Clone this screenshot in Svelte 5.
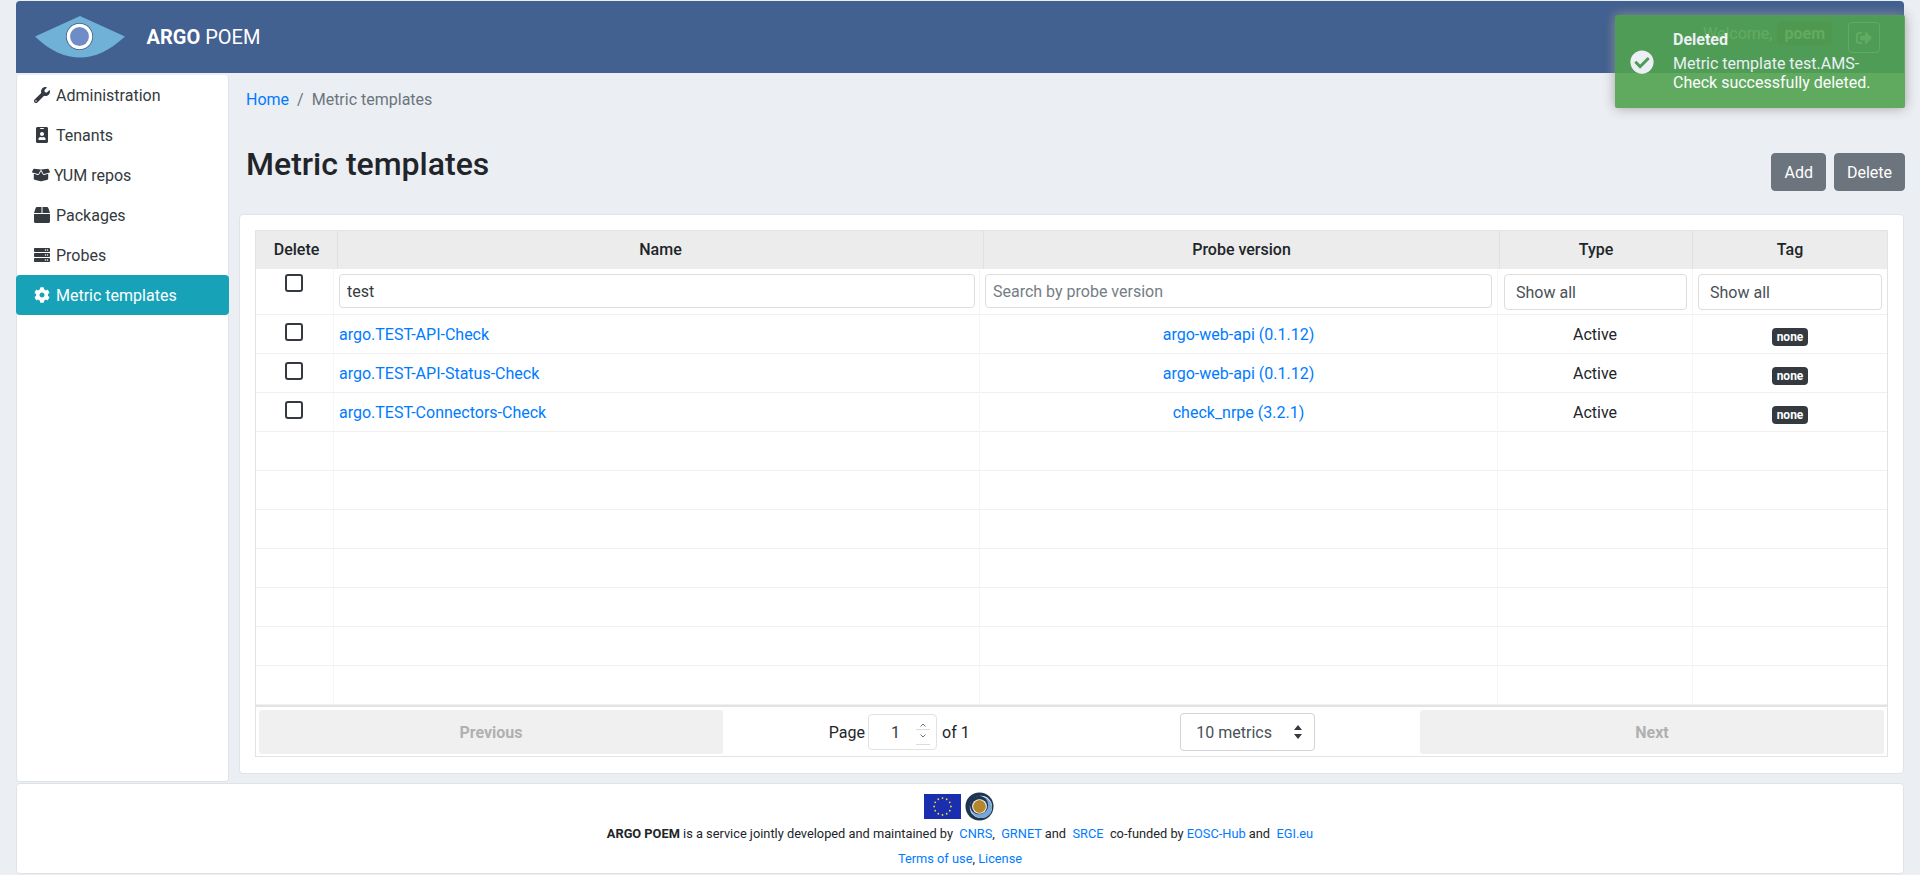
<script>
  const icons = {
    wrench: ['0 0 512 512', 'M507.73 109.1c-2.24-9.03-13.54-12.09-20.12-5.51l-74.36 74.36-67.88-11.31-11.31-67.88 74.36-74.36c6.62-6.62 3.43-17.9-5.66-20.16-47.38-11.74-99.55.91-136.58 37.93-39.64 39.64-50.55 97.1-34.05 147.2L18.74 402.76c-24.99 24.99-24.99 65.51 0 90.5 24.99 24.99 65.51 24.99 90.5 0l213.21-213.21c50.12 16.71 107.47 5.68 147.37-34.22 37.07-37.07 49.7-89.32 37.91-136.73zM64 472c-13.25 0-24-10.75-24-24 0-13.26 10.75-24 24-24s24 10.74 24 24c0 13.25-10.75 24-24 24z'],
    badge: ['0 0 384 512', 'M336 0H48C21.5 0 0 21.5 0 48v416c0 26.5 21.5 48 48 48h288c26.5 0 48-21.5 48-48V48c0-26.5-21.5-48-48-48zM144 32h96c8.8 0 16 7.2 16 16s-7.2 16-16 16h-96c-8.8 0-16-7.2-16-16s7.2-16 16-16zm48 128c35.3 0 64 28.7 64 64s-28.7 64-64 64-64-28.7-64-64 28.7-64 64-64zm112 236.8c0 10.6-10 19.2-22.4 19.2H102.4C90 416 80 407.4 80 396.8v-19.2c0-31.8 30.1-57.6 67.2-57.6h5c12.3 5.1 25.7 8 39.8 8s27.6-2.9 39.8-8h5c37.1 0 67.2 25.8 67.2 57.6v19.2z'],
    boxOpen: ['0 0 640 512', 'M425.7 256c-16.9 0-32.8-9-41.4-23.4L320 126l-64.2 106.6c-8.7 14.5-24.6 23.5-41.5 23.5-4.5 0-9-.6-13.3-1.9L64 215v178c0 14.7 10 27.5 24.2 31l216.2 54.1c10.2 2.5 20.9 2.5 31 0L551.8 424c14.2-3.6 24.2-16.4 24.2-31V215l-137 39.1c-4.3 1.3-8.8 1.9-13.3 1.9zm212.6-112.2L586.8 41c-3.1-6.2-9.8-9.8-16.7-8.9L320 64l91.7 152.1c3.8 6.3 11.4 9.3 18.5 7.3l197.9-56.5c9.9-2.9 14.7-13.9 9.9-23.1zM53.2 41L1.7 143.8c-4.9 9.2 0 20.2 9.8 23l197.9 56.5c7.1 2 14.7-1 18.5-7.3L320 64 69.8 32.1c-6.9-.8-13.5 2.7-16.6 8.9z'],
    box: ['0 0 512 512', 'M509.5 184.6L458.9 32.8C452.4 13.2 434.1 0 413.4 0H272v192h238.7c-.4-2.5-.4-5-1.2-7.4zM240 0H98.6c-20.7 0-39 13.2-45.5 32.8L2.5 184.6c-.8 2.4-.8 4.9-1.2 7.4H240V0zM0 224v240c0 26.5 21.5 48 48 48h416c26.5 0 48-21.5 48-48V224H0z'],
    server: ['0 0 512 512', 'M480 160H32c-17.673 0-32-14.327-32-32V64c0-17.673 14.327-32 32-32h448c17.673 0 32 14.327 32 32v64c0 17.673-14.327 32-32 32zm-48-88c-13.255 0-24 10.745-24 24s10.745 24 24 24 24-10.745 24-24-10.745-24-24-24zm-64 0c-13.255 0-24 10.745-24 24s10.745 24 24 24 24-10.745 24-24-10.745-24-24-24zm112 248H32c-17.673 0-32-14.327-32-32v-64c0-17.673 14.327-32 32-32h448c17.673 0 32 14.327 32 32v64c0 17.673-14.327 32-32 32zm-48-88c-13.255 0-24 10.745-24 24s10.745 24 24 24 24-10.745 24-24-10.745-24-24-24zm-64 0c-13.255 0-24 10.745-24 24s10.745 24 24 24 24-10.745 24-24-10.745-24-24-24zm112 248H32c-17.673 0-32-14.327-32-32v-64c0-17.673 14.327-32 32-32h448c17.673 0 32 14.327 32 32v64c0 17.673-14.327 32-32 32zm-48-88c-13.255 0-24 10.745-24 24s10.745 24 24 24 24-10.745 24-24-10.745-24-24-24zm-64 0c-13.255 0-24 10.745-24 24s10.745 24 24 24 24-10.745 24-24-10.745-24-24-24z'],
    cog: ['0 0 512 512', 'M487.4 315.7l-42.6-24.6c4.3-23.2 4.3-47 0-70.2l42.6-24.6c4.9-2.8 7.1-8.6 5.5-14-11.1-35.6-30-67.8-54.7-94.6-3.8-4.1-10-5.1-14.8-2.3L380.8 110c-17.9-15.4-38.5-27.3-60.8-35.1V25.8c0-5.6-3.9-10.5-9.4-11.7-36.7-8.2-74.3-7.8-109.2 0-5.5 1.2-9.4 6.1-9.4 11.7V75c-22.2 7.9-42.8 19.8-60.8 35.1L88.7 85.5c-4.9-2.8-11-1.9-14.8 2.3-24.7 26.7-43.6 58.9-54.7 94.6-1.7 5.4.6 11.2 5.5 14L67.3 221c-4.3 23.2-4.3 47 0 70.2l-42.6 24.6c-4.9 2.8-7.1 8.6-5.5 14 11.1 35.6 30 67.8 54.7 94.6 3.8 4.1 10 5.1 14.8 2.3l42.6-24.6c17.9 15.4 38.5 27.3 60.8 35.1v49.2c0 5.6 3.9 10.5 9.4 11.7 36.7 8.2 74.3 7.8 109.2 0 5.5-1.2 9.4-6.1 9.4-11.7v-49.2c22.2-7.9 42.8-19.8 60.8-35.1l42.6 24.6c4.9 2.8 11 1.9 14.8-2.3 24.7-26.7 43.6-58.9 54.7-94.6 1.5-5.5-.7-11.3-5.6-14.1zM256 336c-44.1 0-80-35.9-80-80s35.9-80 80-80 80 35.9 80 80-35.9 80-80 80z']
  };
  const signOut = 'M497 273L329 441c-15 15-41 4.5-41-17v-96H152c-13.3 0-24-10.7-24-24v-96c0-13.3 10.7-24 24-24h136V88c0-21.4 25.9-32 41-17l168 168c9.3 9.4 9.3 24.6 0 34zM192 436v-40c0-6.6-5.4-12-12-12H96c-17.7 0-32-14.3-32-32V160c0-17.7 14.3-32 32-32h84c6.6 0 12-5.4 12-12V76c0-6.6-5.4-12-12-12H96c-53 0-96 43-96 96v192c0 53 43 96 96 96h84c6.6 0 12-5.4 12-12z';
  const check = 'M504 256c0 136.967-111.033 248-248 248S8 392.967 8 256 119.033 8 256 8s248 111.033 248 248zM227.314 387.314l184-184c6.248-6.248 6.248-16.379 0-22.627l-22.627-22.627c-6.248-6.249-16.379-6.249-22.628 0L216 308.118l-70.059-70.059c-6.248-6.248-16.379-6.248-22.628 0l-22.627 22.627c-6.248 6.248-6.248 16.379 0 22.627l104 104c6.249 6.249 16.379 6.249 22.628.001z';

  const nav = [
    { label: 'Administration', icon: 'wrench' },
    { label: 'Tenants', icon: 'badge' },
    { label: 'YUM repos', icon: 'boxOpen', wide: true },
    { label: 'Packages', icon: 'box' },
    { label: 'Probes', icon: 'server' },
    { label: 'Metric templates', icon: 'cog', active: true }
  ];
  const rows = [
    { name: 'argo.TEST-API-Check', probe: 'argo-web-api (0.1.12)' },
    { name: 'argo.TEST-API-Status-Check', probe: 'argo-web-api (0.1.12)' },
    { name: 'argo.TEST-Connectors-Check', probe: 'check_nrpe (3.2.1)' },
    null, null, null, null, null, null, null
  ];
  const stars = Array.from({ length: 12 }, (_, i) => {
    const a = (i * Math.PI) / 6;
    return { x: 18.5 + 8.4 * Math.sin(a), y: 12.5 - 8.4 * Math.cos(a) };
  });
</script>

<div class="page">
  <header class="top">
    <div class="brand">
      <svg class="logo" viewBox="0 0 90 44" aria-hidden="true">
        <path d="M0 21.5 L45 1 L90 21.5 C74 36 60 42.5 45 42.5 C30 42.5 15 36 0 21.5 Z" fill="#70b1d7" />
        <circle cx="44.5" cy="21.5" r="13.6" fill="#3e5785" />
        <circle cx="44.5" cy="21.5" r="12.8" fill="#fff" />
        <circle cx="44.5" cy="21.5" r="9.4" fill="#6e8cc5" />
      </svg>
      <span class="title"><b>ARGO</b> POEM</span>
    </div>
    <div class="user">
      <span class="hello">Welcome,</span>
      <span class="who">poem</span>
      <button class="logout" aria-label="Sign out">
        <svg viewBox="0 0 512 512" aria-hidden="true"><path d={signOut} fill="currentColor" /></svg>
      </button>
    </div>
  </header>

  <div class="middle">
    <nav class="side">
      {#each nav as item}
        <a href="#top" class="item" class:active={item.active} class:wide={item.wide}>
          <svg class="ic" viewBox={icons[item.icon][0]} aria-hidden="true"><path d={icons[item.icon][1]} fill="currentColor" /></svg>
          <span>{item.label}</span>
        </a>
      {/each}
    </nav>

    <main class="content">
      <div class="crumbs"><a href="#top">Home</a><span class="sep">/</span><span class="here">Metric templates</span></div>
      <div class="heading">
        <h1>Metric templates</h1>
        <div class="actions">
          <button class="btn">Add</button>
          <button class="btn">Delete</button>
        </div>
      </div>

      <section class="card">
        <div class="table">
          <div class="thead">
            <div>Delete</div><div>Name</div><div>Probe version</div><div>Type</div><div>Tag</div>
          </div>
          <div class="tr filter">
            <div class="cell boxcell"><input type="checkbox" class="cb" /></div>
            <div class="cell"><input class="fc" type="text" value="test" /></div>
            <div class="cell"><input class="fc" type="text" placeholder="Search by probe version" /></div>
            <div class="cell"><select class="fc sel"><option>Show all</option></select></div>
            <div class="cell last"><select class="fc sel"><option>Show all</option></select></div>
          </div>
          {#each rows as r}
            <div class="tr">
              {#if r}
                <div class="cell boxcell"><input type="checkbox" class="cb" /></div>
                <div class="cell txt"><a href="#top">{r.name}</a></div>
                <div class="cell txt center"><a href="#top">{r.probe}</a></div>
                <div class="cell txt center">Active</div>
                <div class="cell txt center last"><span class="pill">none</span></div>
              {:else}
                <div class="cell"></div><div class="cell"></div><div class="cell"></div><div class="cell"></div><div class="cell last"></div>
              {/if}
            </div>
          {/each}
          <div class="pager">
            <button class="pg" disabled>Previous</button>
            <div class="mid">
              <div class="pageinfo">
                <span class="plabel">Page</span>
                <div class="numwrap">
                  <input class="num" type="number" value="1" />
                  <svg class="spin" viewBox="0 0 14 24" aria-hidden="true">
                    <path d="M4.5 4.5 L7 2 L9.5 4.5 M4.5 12.5 L7 15 L9.5 12.5" fill="none" stroke="#6b7278" stroke-width="1" />
                    <path d="M0 7.5 H14 M0 22.5 H14" stroke="#dcdcdc" stroke-width="1" />
                  </svg>
                </div>
                <span class="ptotal">of 1</span>
              </div>
              <div class="sizewrap">
                <select class="size"><option>10 metrics</option></select>
                <svg class="updown" viewBox="0 0 8 14" aria-hidden="true"><path d="M4 0 L8 5 H0 Z M4 14 L0 9 H8 Z" fill="#343a40" /></svg>
              </div>
            </div>
            <button class="pg" disabled>Next</button>
          </div>
        </div>
      </section>
    </main>
  </div>

  <footer class="foot">
    <div class="logos">
      <svg class="eu" viewBox="0 0 37 25" aria-hidden="true">
        <rect width="37" height="25" fill="#1a2fb0" />
        {#each stars as s}<circle cx={s.x} cy={s.y} r="0.9" fill="#f2dc2a" />{/each}
      </svg>
      <svg class="eosc" viewBox="0 0 30 30" aria-hidden="true">
        <circle cx="15" cy="15" r="14.5" fill="#1d3550" />
        <circle cx="16.5" cy="15.5" r="11.5" fill="#fff" />
        <circle cx="17" cy="16" r="11" fill="#7ba7d6" />
        <circle cx="14.5" cy="13.5" r="9.5" fill="#1d3550" />
        <circle cx="15" cy="15" r="7.6" fill="#fff" />
        <circle cx="15" cy="15" r="6.6" fill="#b5862c" />
      </svg>
    </div>
    <p class="l1"><b>ARGO POEM</b> is a service jointly developed and maintained by &nbsp;<a href="#top">CNRS</a>, &nbsp;<a href="#top">GRNET</a> and &nbsp;<a href="#top">SRCE</a> &nbsp;co-funded by <a href="#top">EOSC-Hub</a> and &nbsp;<a href="#top">EGI.eu</a></p>
    <p class="l2"><a href="#top">Terms of use</a>, <a href="#top">License</a></p>
  </footer>

  <aside class="toast">
    <svg class="tick" viewBox="0 0 512 512" aria-hidden="true"><path d={check} fill="currentColor" /></svg>
    <h4>Deleted</h4>
    <p>Metric template test.AMS-Check successfully deleted.</p>
  </aside>
</div>

<style>
  :global(body) {
    margin: 0;
    background: #ebeef3;
    font-family: Roboto, "Liberation Sans", sans-serif;
    font-size: 16px;
    color: #212529;
    overflow: hidden;
  }
  a { color: #007bff; text-decoration: none; }
  .page { position: relative; height: 875px; padding: 1px 16px 0; box-sizing: border-box; display: flex; flex-direction: column; }

  .top {
    height: 72px; background: #426090; border-radius: 4px 4px 0 0; flex: none;
    display: flex; align-items: center; justify-content: space-between; margin-bottom: 2px;
  }
  .brand { display: flex; align-items: center; }
  .logo { width: 90px; height: 44px; margin-left: 19px; }
  .title { margin-left: 21.5px; font-size: 20px; color: #fff; }
  .title b { font-weight: 700; }
  .user { display: flex; align-items: flex-start; color: #fff; margin-right: 24px; align-self: flex-start; padding-top: 21px; }
  .hello { line-height: 23px; }
  .who { font-weight: 700; background: #343a40; padding: 0 7px; height: 23px; line-height: 23px; border-radius: 4px; margin-left: 5px; color: #fff; }
  .logout { width: 32px; height: 31px; margin-left: 16px; border: 1px solid #fff; background: transparent; border-radius: 4px; color: #fff; display: flex; align-items: center; justify-content: center; padding: 0; }
  .logout svg { width: 16px; height: 16px; }

  .middle { display: flex; height: 707px; flex: none; }
  .side {
    width: 213px; background: #fff; border: 1px solid #dfe3e8; border-width: 0 1px 1px 1px;
    box-sizing: border-box; border-radius: 4px; flex: none; display: flex; flex-direction: column;
  }
  .item { height: 40px; display: flex; align-items: center; color: #343a40; padding-left: 18px; border-radius: 4px; flex: none; margin: 0 -1px; }
  .item.wide { padding-left: 16px; }
  .item.active { background: #17a2b8; color: #fff; }
  .ic { width: 16px; height: 16px; margin-right: 6px; flex: none; }
  .wide .ic { width: 18px; margin-right: 4px; }

  .content { flex: 1; min-width: 0; padding-left: 10px; }
  .crumbs { margin: 13px 0 0 7px; line-height: 24px; }
  .sep { color: #6c757d; padding: 0 8px; }
  .here { color: #6c757d; }
  .heading { display: flex; justify-content: space-between; align-items: flex-end; height: 46px; margin: 33px 0 23px 7px; }
  h1 { margin: 0; font-size: 32px; font-weight: 500; line-height: 38.4px; align-self: flex-start; }
  .actions { display: flex; gap: 8px; margin-right: -1px; }
  .btn { height: 38px; background: #6c757d; border: 1px solid #6c757d; color: #fff; font: inherit; padding: 0 12px; border-radius: 4px; }

  .card { background: #fff; border: 1px solid #dfe3e8; border-radius: 4px; padding: 15px; height: 560px; box-sizing: border-box; }
  .table { border: 1px solid #e3e3e3; height: 527px; box-sizing: border-box; display: flex; flex-direction: column; }
  .thead {
    display: grid; grid-template-columns: 82px 646px 516px 193px 1fr; height: 38px; flex: none;
    background: #ececec; font-weight: 500; text-align: center; line-height: 38px;
  }
  .thead > div { border-right: 1px solid #e0e0e0; }
  .thead > div:last-child { border-right: 0; }
  .tr { display: grid; grid-template-columns: 78px 646px 518px 195px 1fr; height: 39px; flex: none; box-sizing: border-box; border-bottom: 1px solid #f0f0f0; }
  .tr.filter { height: 46px; }
  .cell { border-right: 1px solid #f6f6f6; box-sizing: border-box; min-width: 0; }
  .cell.last { border-right: 0; }
  .filter .cell { padding: 5px 5px 0 5px; }
  .filter .cell:nth-child(2) { padding-right: 4px; }
  .filter .cell:nth-child(4) { padding-left: 6px; }
  .filter .boxcell { padding-top: 5px; padding-left: 0; padding-right: 0; }
  .boxcell { display: flex; justify-content: center; padding-top: 8px; }
  .cb {
    appearance: none; width: 18px; height: 18px; margin: 0; box-sizing: border-box;
    border: 2px solid #343a40; border-radius: 3px; background: #fff; transform: translateX(-1px);
  }
  .fc {
    width: 100%; height: 34px; box-sizing: border-box; border: 1px solid #ddd; border-radius: 4px;
    padding: 0 7px; font: 400 16px Roboto, sans-serif; color: #343a40; background: #fff; outline: 0; display: block;
  }
  .fc::placeholder { color: #757d85; opacity: 1; }
  .sel { appearance: none; height: 36px; padding: 0 11px; color: #495057; }
  .txt { line-height: 40px; padding-left: 5px; }
  .center { text-align: center; padding-left: 0; }
  .pill { display: inline-block; background: #343a40; color: #fff; font-size: 12px; font-weight: 700; line-height: 18px; padding: 0 4.8px; border-radius: 4px; vertical-align: middle; margin-top: 3px; }

  .pager { flex: 1; border-top: 2px solid #e3e3e3; display: grid; grid-template-columns: 464px 1fr 464px; padding: 3px 3px 2px; }
  .pg { border: 0; background: #f0f0f0; border-radius: 3px; color: #b0b0b0; font: 700 16px Roboto, sans-serif; height: 44px; }
  .mid { display: grid; grid-template-columns: 1fr 1fr; align-items: center; justify-items: center; }
  .pageinfo { display: flex; align-items: center; padding-left: 4px; }
  .plabel { margin-right: 3px; }
  .ptotal { margin-left: 5px; }
  .numwrap { position: relative; }
  .num { width: 69px; height: 36px; box-sizing: border-box; border: 1px solid #e2e2e2; border-radius: 4px; font: 400 16px Roboto, sans-serif; color: #343a40; text-align: center; padding: 0 14px 0 0; outline: 0; display: block; appearance: textfield; }
  .num::-webkit-inner-spin-button { appearance: none; margin: 0; }
  .spin { position: absolute; left: 48px; top: 8px; width: 14px; height: 24px; }
  .sizewrap { position: relative; margin-left: 4px; }
  .size { appearance: none; width: 135px; height: 38px; box-sizing: border-box; border: 1px solid #ced4da; border-radius: 4px; background: #fff; font: 400 16px Roboto, sans-serif; color: #495057; padding: 0 15px; outline: 0; display: block; }
  .updown { position: absolute; right: 13px; top: 12px; width: 8px; height: 14px; }

  .foot { height: 91px; margin-top: 1px; flex: none; background: #fff; border: 1px solid #dfe3e8; border-radius: 4px; box-sizing: border-box; text-align: center; font-size: 12.8px; }
  .logos { display: flex; justify-content: center; align-items: center; gap: 4px; margin-top: 8px; height: 29px; padding-right: 2px; }
  .eu { width: 37px; height: 25px; }
  .eosc { width: 29px; height: 29px; }
  .foot p { margin: 0; }
  .foot .l1 { line-height: 20px; margin-top: 3px; }
  .foot .l2 { line-height: 20px; margin-top: 5px; }

  .toast {
    position: absolute; top: 15px; right: 15px; width: 290px; height: 93px; box-sizing: border-box;
    background: #51a351; opacity: 0.9; color: #fff; box-shadow: 0 0 12px #999; border-radius: 2px;
    padding: 15px 15px 15px 58px; font-size: 16px; line-height: 19.2px;
  }
  .toast h4 { margin: 0 0 5px; font-size: 16px; font-weight: 700; line-height: 19.2px; }
  .toast p { margin: 0; }
  .tick { position: absolute; left: 15px; top: 35px; width: 24px; height: 24px; }
</style>
